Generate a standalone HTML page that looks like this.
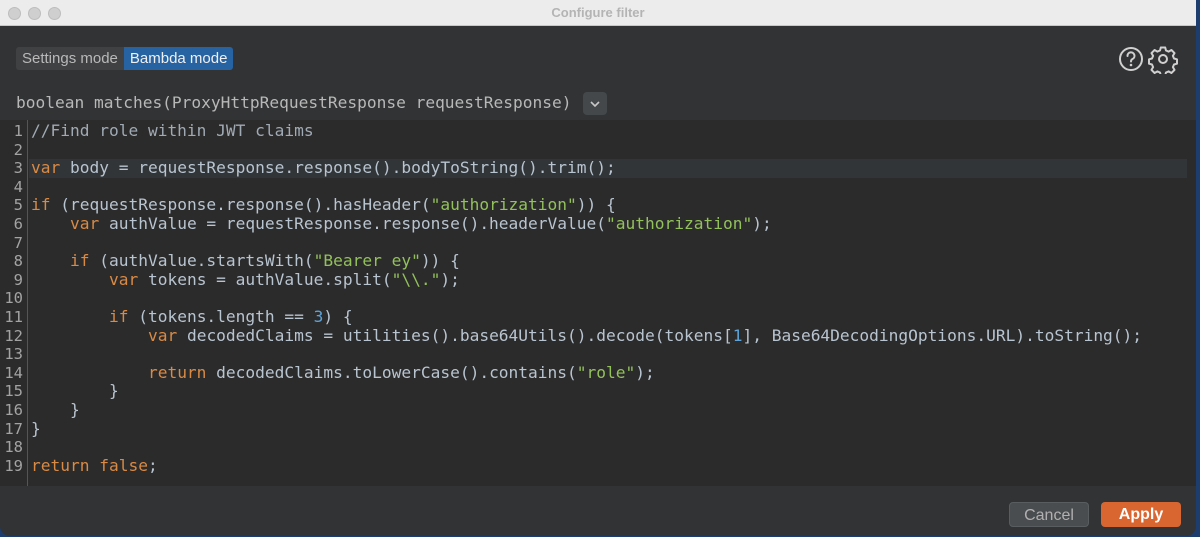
<!DOCTYPE html>
<html><head><meta charset="utf-8"><style>
*{margin:0;padding:0;box-sizing:border-box}
body{width:1200px;height:537px;background:#1c3d6e;overflow:hidden;font-family:"Liberation Sans",sans-serif}
.win{position:absolute;left:0;top:0;width:1196px;height:536px;background:#313335;border-radius:0 0 10px 10px;overflow:hidden}
.title{height:26px;background:#ececec;border-bottom:1px solid #c8c8c8;position:relative;text-align:center;font-size:13px;font-weight:bold;color:#b4b4b4;line-height:25px}
.dot{position:absolute;top:7px;width:13px;height:13px;border-radius:50%;background:#cfcfcf;border:1px solid #bdbdbd}
.seg{position:absolute;left:16px;top:47px;height:23px;display:flex;border-radius:3px;overflow:hidden;font-size:15px;line-height:23px}
.seg span{padding:0 6px}
.s1{background:#3f4143;color:#b9b9b9}
.s2{background:#2763a3;color:#f0f0f0}
.sig{position:absolute;left:16px;top:93px;font-family:"DejaVu Sans Mono",monospace;font-size:16.2px;color:#b8b8b8;line-height:20px}
.dd{position:absolute;left:583px;top:92px;width:24px;height:23px;background:#45484a;border-radius:4px}
.code{position:absolute;left:0;top:120px;width:1196px;height:366px;background:#2b2b2b}
.gut{position:absolute;left:0;top:0;width:28px;height:366px;border-right:1px solid #555}
.ln,.cl{font-family:"DejaVu Sans Mono",monospace;font-size:16.2px;line-height:18.6px;white-space:pre}
.ln{position:absolute;right:4px;top:2px;text-align:right;color:#a3a3a3;font-size:15.5px}
.cl{position:absolute;left:31px;top:2px;color:#b8c4d0}
.hl{position:absolute;left:29px;top:39px;width:1158px;height:19px;background:#323538}
.k{color:#d98a45}.s{color:#93c15c}.n{color:#5fa3d8}.c{color:#a0aab4}
.btn{position:absolute;top:502px;height:25px;border-radius:4px;font-size:16px;line-height:25px;text-align:center}
</style></head><body>
<div class="win">
<div class="title"><div class="dot" style="left:8px"></div><div class="dot" style="left:28px"></div><div class="dot" style="left:48px"></div>Configure filter</div>
<div class="seg"><span class="s1">Settings mode</span><span class="s2">Bambda mode</span></div>
<svg style="position:absolute;left:1119px;top:46px" width="60" height="28" viewBox="0 0 60 28">
<circle cx="12" cy="13" r="11" fill="none" stroke="#d0d0d0" stroke-width="2"/>
<path d="M8.5 10a3.5 3.5 0 1 1 5 3c-1.2.6-1.5 1.2-1.5 2.5" fill="none" stroke="#d0d0d0" stroke-width="2" stroke-linecap="round"/>
<circle cx="12" cy="19" r="1.3" fill="#d0d0d0"/>
<g transform="translate(44,13)" fill="none" stroke="#d0d0d0" stroke-width="2" stroke-linejoin="round">
<path d="M-2.2-11.5h4.4l.8 3 2.6 1.1 2.8-1.6 3.1 3.1-1.6 2.8 1.1 2.6 3 .8v4.4l-3 .8-1.1 2.6 1.6 2.8-3.1 3.1-2.8-1.6-2.6 1.1-.8 3h-4.4l-.8-3-2.6-1.1-2.8 1.6-3.1-3.1 1.6-2.8-1.1-2.6-3-.8v-4.4l3-.8 1.1-2.6-1.6-2.8 3.1-3.1 2.8 1.6 2.6-1.1z"/>
<circle r="4"/></g></svg>
<div class="sig">boolean matches(ProxyHttpRequestResponse requestResponse)</div>
<div class="dd"><svg width="24" height="23"><path d="M8 10l4 4 4-4" fill="none" stroke="#c8c8c8" stroke-width="1.6"/></svg></div>
<div class="code">
<div class="hl"></div>
<div class="gut"><div class="ln">1
2
3
4
5
6
7
8
9
10
11
12
13
14
15
16
17
18
19</div></div>
<div class="cl"><span class="c">//Find role within JWT claims</span>

<span class="k">var</span> body = requestResponse.response().bodyToString().trim();

<span class="k">if</span> (requestResponse.response().hasHeader(<span class="s">"authorization"</span>)) {
    <span class="k">var</span> authValue = requestResponse.response().headerValue(<span class="s">"authorization"</span>);

    <span class="k">if</span> (authValue.startsWith(<span class="s">"Bearer ey"</span>)) {
        <span class="k">var</span> tokens = authValue.split(<span class="s">"\\."</span>);

        <span class="k">if</span> (tokens.length == <span class="n">3</span>) {
            <span class="k">var</span> decodedClaims = utilities().base64Utils().decode(tokens[<span class="n">1</span>], Base64DecodingOptions.URL).toString();

            <span class="k">return</span> decodedClaims.toLowerCase().contains(<span class="s">"role"</span>);
        }
    }
}

<span class="k">return false</span>;</div>
</div>
<div class="btn" style="left:1009px;width:80px;background:#4a4d4f;color:#b0b0b0;border:1px solid #5a5d5f">Cancel</div>
<div class="btn" style="left:1101px;width:80px;background:#d96630;color:#fff;font-weight:bold">Apply</div>
</div>
</body></html>
